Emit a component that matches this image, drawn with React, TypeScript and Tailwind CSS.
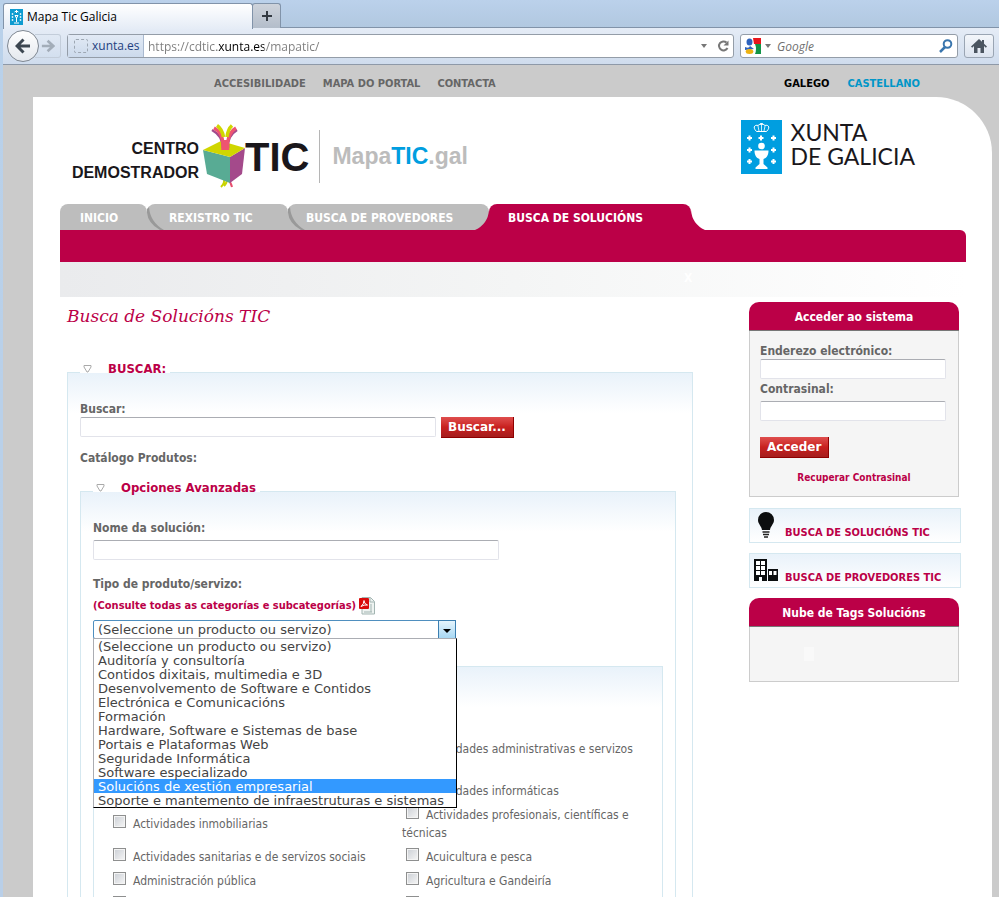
import React, {useState} from "react";
import clsx from "clsx";

const solutionTypes = [
  "(Seleccione un producto ou servizo)",
  "Auditoría y consultoría",
  "Contidos dixitais, multimedia e 3D",
  "Desenvolvemento de Software e Contidos",
  "Electrónica e Comunicacións",
  "Formación",
  "Hardware, Software e Sistemas de base",
  "Portais e Plataformas Web",
  "Seguridade Informática",
  "Software especializado",
  "Solucións de xestión empresarial",
  "Soporte e mantemento de infraestruturas e sistemas",
];

const sectors = [
  "Actividades administrativas e servizos auxiliares",
  "Actividades informáticas",
  "Actividades inmobiliarias",
  "Actividades profesionais, científicas e técnicas",
  "Actividades sanitarias e de servizos sociais",
  "Acuicultura e pesca",
  "Administración pública",
  "Agricultura e Gandeiría",
  "Alimentación",
  "Artesanía",
];

const XuntaShield = ({className}: {className: string}) => (
  <svg viewBox="0 0 41 54" preserveAspectRatio="none" className={className} aria-hidden="true">
    <rect width="41" height="54" fill="#009ee0" />
    <g stroke="#fff" strokeWidth="2">
      <path d="M6 18h5M8.500 15.500v5M17.500 18h5M20 15.500v5M30 18h5M32.500 15.500v5" />
      <path d="M6 30h5M8.500 27.500v5M30 30h5M32.500 27.500v5M6 41.500h5M8.500 39v5M30 41.500h5M32.500 39v5" />
    </g>
    <g fill="none" stroke="#fff">
      <path d="M15.500 11.500C11 7 14 4.500 17 5.500Q19 3.500 20.500 4.500Q22 3.500 24 5.500C27 4.500 30 7 25.500 11.500Z" />
      <path d="M18 11L17 6M23 11L24 6M20.500 11V3M19 3.500h3" strokeWidth=".8" />
    </g>
    <circle cx="20.500" cy="26" r="3.300" fill="#fff" />
    <path d="M13.500 30.500h14c0 5-2 7.500-5 8.500v5l4 3.500v1.500h-12v-1.500l4-3.500v-5c-3-1-5-3.500-5-8.500z" fill="#fff" />
  </svg>
);

const TabIcon = () => (
  <svg viewBox="0 0 13 16" className="h-4 w-[13px]" aria-hidden="true">
    <rect width="13" height="16" fill="#0d9bd0" />
    <path d="M4.500 3Q6.500 1 8.500 3M6.500 1v3M5 6.500h3L6.500 9zM6.500 8v5M4 14h5" stroke="#fff" fill="none" />
    <path d="M1.500 5h2M1.500 8h2M1.500 11h2M9.500 5h2M9.500 8h2M9.500 11h2M2.500 4v9M10.500 4v9" stroke="#fff" strokeWidth=".7" strokeDasharray="2 1" />
  </svg>
);

const CubeLogo = () => (
  <svg viewBox="0 0 42 65" className="h-[65px] w-[42px] shrink-0" aria-hidden="true">
    <path d="M21 55q1 4-3 8M24 55q0 4-3 7" stroke="#c8d400" strokeWidth="2" fill="none" />
    <path d="M24 55q4 3 5 8" stroke="#e84e6e" strokeWidth="2" fill="none" />
    <path d="M0 26L27 33L27 59L4 50Z" fill="#58ab94" />
    <path d="M27 33L42 24L39 50L27 59Z" fill="#a44a8b" />
    <path d="M0 26L18 17L42 24L27 33Z" fill="#d0d600" />
    <path d="M20 24Q20 12 9 6" stroke="#a44a8b" strokeWidth="2.500" fill="none" />
    <path d="M25 24Q24 12 34 6" stroke="#a44a8b" strokeWidth="2.500" fill="none" />
    <path d="M20 26V19Q19 8 11 4" stroke="#ee5571" strokeWidth="3.500" fill="none" />
    <path d="M24.500 26V19Q26 8 33 4" stroke="#ee5571" strokeWidth="3.500" fill="none" />
    <path d="M22.500 26V16" stroke="#ee5571" strokeWidth="3" />
    <path d="M20.500 13Q19 5 14 1.500M24 13Q25 5 29 1.500" stroke="#d0d600" strokeWidth="3.500" fill="none" />
  </svg>
);

const BrowserChrome = () => (
  <header className="shrink-0 font-['Open_Sans','Noto_Sans',sans-serif] text-[12px]">
    <div className="flex h-7 items-end bg-gradient-to-b from-[#bbd1eb] to-[#b1c8e0]">
      <div className="-mb-px flex h-[26px] w-[250px] items-center gap-1 rounded-t-[3px] border border-b-0 border-[#8193a9] bg-gradient-to-b from-white to-[#e5ecf6] pl-1.5 text-black">
        <TabIcon />
        <span>Mapa Tic Galicia</span>
      </div>
      <button
        type="button"
        aria-label="Nova lapela"
        className="-ml-px flex h-[25px] w-[29px] items-center justify-center rounded-t-[3px] border border-b-0 border-[#8193a9] bg-gradient-to-b from-[#ced3db] to-[#b3bdca]"
      >
        <svg viewBox="0 0 10 10" className="size-2.5">
          <path d="M5 0v10M0 5h10" stroke="#333a42" strokeWidth="2" />
        </svg>
      </button>
      <div className="h-full flex-1 border-b border-[#8193a9]" />
    </div>
    <div className="flex h-[37px] items-center border-b border-[#8e99a8] bg-gradient-to-b from-[#e5ecf6] to-[#cfdced] pr-[5px] pl-1">
      <button
        type="button"
        aria-label="Atrás"
        className="z-10 flex size-8 items-center justify-center rounded-full border border-[#7f8791] bg-gradient-to-b from-white to-[#e4e8ee]"
      >
        <svg viewBox="0 0 16 16" className="size-4">
          <path d="M8.500 1.500L2 8l6.500 6.500M2.500 8H15" stroke="#3c4650" strokeWidth="3" fill="none" />
        </svg>
      </button>
      <button
        type="button"
        aria-label="Adiante"
        className="-ml-1 flex h-6 w-[26px] items-center justify-center rounded-r-[3px] border border-l-0 border-[#c3cdda]"
      >
        <svg viewBox="0 0 16 16" className="size-3.5">
          <path d="M7.500 2l6.500 6-6.500 6M13.500 8H1" stroke="#a3adb9" strokeWidth="3" fill="none" />
        </svg>
      </button>
      <div className="ml-1.5 flex h-6 flex-1 items-center rounded-[3px] border border-[#949da8] bg-white">
        <div className="flex h-full w-[76px] items-center gap-1 border-r border-[#a9b9cf] bg-gradient-to-b from-[#e2eaf5] to-[#ccdaec] pl-1.5 text-[#1f3f80]">
          <span className="size-[14px] shrink-0 rounded-[2px] border border-dashed border-[#9da7b3]" />
          <span>xunta.es</span>
        </div>
        <input
          aria-label="Enderezo"
          defaultValue="https://cdtic.xunta.es/mapatic/"
          className="min-w-0 flex-1 bg-[linear-gradient(to_right,#7c7c7c_73px,#000_73px,#000_120px,#7c7c7c_120px)] bg-clip-text pt-0.5 pl-1 text-transparent outline-none"
        />
        <svg viewBox="0 0 6 4" className="mr-2.5 h-1 w-1.5">
          <path d="M0 0h6L3 4z" fill="#777" />
        </svg>
        <svg viewBox="0 0 12 12" className="mr-1 size-3">
          <path d="M9.500 2.500A4.500 4.500 0 1 0 10.500 8" stroke="#777" strokeWidth="2" fill="none" />
          <path d="M6.500 5.500h5V.5z" fill="#777" />
        </svg>
      </div>
      <div className="ml-1.5 flex h-6 w-[218px] items-center rounded-[3px] border border-[#949da8] bg-white pl-1">
        <svg viewBox="0 0 16 16" className="size-4">
          <path d="M8 0h8v6H9z" fill="#e8161c" />
          <path d="M10 6h6v10h-6q2-5 0-10z" fill="#129447" />
          <path d="M0 9q4 2 5-1l4 3-9 1z" fill="#2e63bd" />
          <ellipse cx="4.500" cy="4" rx="3" ry="3.500" fill="#2e63bd" />
          <ellipse cx="4.500" cy="13.500" rx="3.800" ry="2.500" fill="#eeb211" />
        </svg>
        <svg viewBox="0 0 6 4" className="mr-1.5 ml-1 h-1 w-1.5">
          <path d="M0 0h6L3 4z" fill="#777" />
        </svg>
        <input
          aria-label="Google"
          placeholder="Google"
          className="min-w-0 flex-1 pt-0.5 italic outline-none placeholder:text-[#707070]"
        />
        <svg viewBox="0 0 14 14" className="mr-1 size-3.5">
          <circle cx="8.500" cy="5" r="3.800" stroke="#3a76ae" strokeWidth="2" fill="none" />
          <path d="M6 8L1 13" stroke="#3a76ae" strokeWidth="2.500" />
        </svg>
      </div>
      <button
        type="button"
        aria-label="Inicio"
        className="ml-1.5 flex h-6 w-[30px] items-center justify-center rounded-[3px] border border-[#9aa5b3] bg-gradient-to-b from-[#f3f6fa] to-[#dce4ef]"
      >
        <svg viewBox="0 0 16 14" className="h-3.5 w-4">
          <path d="M8 0L0 7.500l1.200 1.200L3 7v7h3.500V9h3v5H13V7l1.800 1.700L16 7.500 13 4.700V1h-2v1.800z" fill="#4b5560" />
        </svg>
      </button>
    </div>
  </header>
);

const TopLinks = () => (
  <nav className="flex h-8 items-center pr-[79px] pl-[211px] pt-1.5 text-[11px] font-bold text-[#666]">
    <div className="flex flex-1 gap-[17px]">
      <a href="#accesibilidade">ACCESIBILIDADE</a>
      <a href="#mapa">MAPA DO PORTAL</a>
      <a href="#contacta">CONTACTA</a>
    </div>
    <div className="flex gap-[18px]">
      <a href="#gl" className="text-black">GALEGO</a>
      <a href="#es" className="text-[#0096c8]">CASTELLANO</a>
    </div>
  </nav>
);

const Masthead = () => (
  <div className="flex h-[107px] items-start pr-[77px] pl-[34px] pt-[23px]">
    <a href="#inicio" className="flex items-center pt-1 font-['Liberation_Sans',sans-serif] text-[#1a171b]">
      <span className="w-[132px] pt-2 text-right text-[16px] leading-6 font-bold">
        CENTRO
        <br />
        DEMOSTRADOR
      </span>
      <span className="ml-1">
        <CubeLogo />
      </span>
      <span className="text-[40px] leading-[60px] font-bold">TIC</span>
      <span className="mr-3 ml-2.5 h-[53px] w-px bg-[#b5b5b5]" />
      <span className="text-[23px] font-bold text-[#bcbcbc]">
        Mapa<span className="text-[#009ee0]">TIC</span>.gal
      </span>
    </a>
    <a href="#xunta" className="ml-auto flex gap-2">
      <XuntaShield className="h-[54px] w-[41px]" />
      <span className="font-['Lato',sans-serif] text-[23px] leading-6 text-[#1a171b]">
        XUNTA
        <br />
        DE GALICIA
      </span>
    </a>
  </div>
);

const TabShade = () => (
  <svg viewBox="0 0 17 26" className="absolute top-0 left-0 h-[26px] w-[17px]" aria-hidden="true">
    <path d="M0 5Q-1 18 13 26h4Q3 18 2 3z" fill="#999" />
  </svg>
);

const MainNav = () => (
  <nav className="pr-[26px] pl-[27px] text-[12px] font-bold text-white">
    <ul className="flex h-[26px] leading-7">
      <li className="w-[87px] rounded-t-lg bg-[#bdbdbd] pl-5">
        <a href="#inicio">INICIO</a>
      </li>
      <li className="relative w-[141px] rounded-t-lg bg-[#bdbdbd] pl-[22px]">
        <TabShade />
        <a href="#rexistro">REXISTRO TIC</a>
      </li>
      <li className="relative w-[201px] rounded-t-lg bg-[#bdbdbd] pl-[18px]">
        <TabShade />
        <a href="#provedores">BUSCA DE PROVEDORES</a>
      </li>
      <li className="relative w-[202px] rounded-t-lg bg-[#bb0047] pl-[19px]">
        <svg viewBox="0 0 14 26" className="absolute top-0 -left-3.5 h-[26px] w-3.5" aria-hidden="true">
          <path d="M14 6Q13 20 0 26H14z" fill="#bb0047" />
        </svg>
        <a href="#solucions">BUSCA DE SOLUCIÓNS</a>
        <svg viewBox="0 0 14 26" className="absolute top-0 -right-3.5 h-[26px] w-3.5" aria-hidden="true">
          <path d="M0 6Q1 20 14 26H0z" fill="#bb0047" />
        </svg>
      </li>
    </ul>
    <div className="h-8 rounded-tr-md bg-[#bb0047]" />
    <div className="h-[35px] bg-gradient-to-r from-[#eaebed] via-[#f4f5f5] to-white pl-[624px] leading-8">X</div>
  </nav>
);

interface PanelProps {
  legend?: string;
  className: string;
  children: React.ReactNode;
}

const Panel = ({legend, className, children}: PanelProps) => (
  <fieldset
    className={clsx(
      "border border-[#d5e8f0] bg-gradient-to-b from-[#e9f2fa] to-white bg-[length:100%_40px] bg-no-repeat",
      className,
    )}
  >
    {legend && (
      <legend className="float-left -mt-3 flex h-3 items-center bg-white pt-1 pr-1 pl-[3px] text-[13px] leading-3 font-bold text-[#bb0047]">
        <svg viewBox="0 0 9 8" className="mr-4 h-2 w-[9px]" aria-hidden="true">
          <path d="M1 .5h7v1.500L5 7H4L1 2z" fill="none" stroke="#aaa" />
        </svg>
        {legend}
      </legend>
    )}
    <div className="clear-both">{children}</div>
  </fieldset>
);

const fieldClass =
  "block h-5 rounded-[2px] border border-[#e2e3ea] border-t-[#abadb3] bg-white px-1 outline-none";

const RedButton = ({children}: {children: React.ReactNode}) => (
  <button
    type="button"
    className="h-[21px] border-r border-b border-[#8f0000] bg-gradient-to-b from-[#df4d4d] via-[#c9201f] to-[#a51e1e] px-[7px] font-['DejaVu_Sans',sans-serif] text-[12px] leading-5 font-bold text-white"
  >
    {children}
  </button>
);

const TypeSelect = () => {
  const [value, setValue] = useState(solutionTypes[0]);
  return (
    <div className="relative w-[363px] font-['DejaVu_Sans',sans-serif] text-[13px] font-normal text-[#444]">
      <select
        id="tipo"
        value={value}
        onChange={(e) => setValue(e.target.value)}
        className="block h-[19px] w-full appearance-none rounded-[2px] border border-[#4f8fbf] bg-white pl-1 leading-4 outline-none"
      >
        {solutionTypes.map((type) => (
          <option key={type}>{type}</option>
        ))}
      </select>
      <span className="pointer-events-none absolute top-0 right-0 flex h-[19px] w-[18px] items-center justify-center border border-[#3c7fb1] bg-gradient-to-b from-[#e5f4fc] to-[#a8d8f3]">
        <svg viewBox="0 0 8 4" className="mt-0.5 h-1 w-2">
          <path d="M0 0h8L4 4z" fill="#000" />
        </svg>
      </span>
      <ul
        role="listbox"
        className="absolute top-[18px] left-0 z-10 w-[364px] border border-black border-t-[#abadb3] border-l-[#abadb3] bg-white leading-4"
      >
        {solutionTypes.map((type) => (
          <li
            key={type}
            role="option"
            aria-selected={type === "Solucións de xestión empresarial"}
            onClick={() => setValue(type)}
            className="h-3.5 pl-1 whitespace-nowrap aria-selected:bg-[#3399ff] aria-selected:text-white"
          >
            {type}
          </li>
        ))}
      </ul>
    </div>
  );
};

const SearchForm = () => (
  <main className="min-w-0 flex-1">
    <h1 className="h-[75px] pt-1 font-['DejaVu_Serif',serif] text-[17px] leading-[30px] text-[#bb0047] italic">
      Busca de Solucións TIC
    </h1>
    <form className="text-[12px] font-bold text-[#666]">
      <Panel legend="BUSCAR:" className="pr-4 pb-4 pl-3">
        <label htmlFor="buscar" className="block pt-7 leading-4">
          Buscar:
        </label>
        <div className="flex items-start gap-[5px]">
          <input id="buscar" className={clsx(fieldClass, "w-[356px]")} />
          <RedButton>Buscar...</RedButton>
        </div>
        <p className="mt-3 mb-[25px] leading-4">Catálogo Produtos:</p>
        <Panel legend="Opciones Avanzadas" className="pr-3 pb-4 pl-3">
          <label htmlFor="nome" className="block pt-7 pb-1 leading-4">
            Nome da solución:
          </label>
          <input id="nome" className={clsx(fieldClass, "w-[406px]")} />
          <label htmlFor="tipo" className="mt-4 block leading-4">
            Tipo de produto/servizo:
          </label>
          <a href="#categorias" className="mt-1 mb-1 flex h-5 items-center gap-[3px] text-[11px] text-[#bb0047]">
            (Consulte todas as categorías e subcategorías)
            <svg viewBox="0 0 16 18" className="h-[18px] w-4" aria-hidden="true">
              <path d="M3 .5h8.500l4 4v12.500H3z" fill="#eef3f1" stroke="#a3b5b2" />
              <path d="M11 1v4h4M12 7v8M5 15h8" stroke="#a3b5b2" fill="none" />
              <rect y="1" width="10" height="11" rx="1" fill="#d90b0b" />
              <path d="M2 9.500Q5 7 5 3.500Q5 7 8.500 8Q5 7.500 2 9.500" stroke="#fff" fill="none" />
            </svg>
          </a>
          <TypeSelect />
          <Panel className="mt-[27px] pr-3 pb-4 pl-[15px]">
            {/* the first two rows only use the right column */}
            <ul className="grid grid-cols-[293px_1fr] items-center gap-y-1.5 pt-[73px] leading-[18px] font-normal">
              {sectors.map((sector) => (
                <li key={sector} className="first:col-start-2 nth-2:col-start-2">
                  <label>
                    <input
                      type="checkbox"
                      className="mr-[7px] ml-1 size-[13px] appearance-none border border-[#8e8f8f] bg-gradient-to-br from-[#cbcfd5] to-[#f6f6f6] shadow-[inset_0_0_0_1px_#f4f4f4]"
                    />
                    {sector}
                  </label>
                </li>
              ))}
            </ul>
          </Panel>
        </Panel>
      </Panel>
    </form>
  </main>
);

const BoxTitle = ({children}: {children: React.ReactNode}) => (
  <h2 className="h-[29px] rounded-t-[10px] border-b border-[#777] bg-[#bb0047] text-center text-[12px] leading-[30px] font-bold text-white">
    {children}
  </h2>
);

const Sidebar = () => (
  <aside className="w-[210px] shrink-0 pt-[5px] font-bold">
    <section>
      <BoxTitle>Acceder ao sistema</BoxTitle>
      <form className="h-[166px] border border-t-0 border-[#ccc] bg-[#f5f5f5] px-2.5 pt-3 text-[12px] leading-4 text-[#666]">
        <label htmlFor="email" className="block">
          Enderezo electrónico:
        </label>
        <input id="email" type="email" className={clsx(fieldClass, "w-[186px]")} />
        <label htmlFor="contrasinal" className="mt-0.5 mb-1 block">
          Contrasinal:
        </label>
        <input id="contrasinal" type="password" className={clsx(fieldClass, "mb-4 w-[186px]")} />
        <RedButton>Acceder</RedButton>
        <a href="#recuperar" className="mt-3 block text-center text-[10px] leading-4 text-[#bb0047]">
          Recuperar Contrasinal
        </a>
      </form>
    </section>
    <a
      href="#solucions"
      className="mt-[11px] -mr-0.5 flex h-[35px] border border-[#d5e8f0] bg-gradient-to-b from-[#e9f2fa] to-white text-[11px] text-[#bb0047]"
    >
      <svg viewBox="0 0 16 28" className="mt-[3px] ml-2 h-7 w-4" aria-hidden="true">
        <path d="M8 0a8 8 0 0 1 8 8c0 4-3.500 6-4 10H4C3.500 14 0 12 0 8a8 8 0 0 1 8-8z" fill="#0c0e0f" />
        <path d="M4.500 20h7M5 22.500h6M6 25h4" stroke="#222" strokeWidth="1.300" />
      </svg>
      <span className="mt-4 ml-[11px] leading-4">BUSCA DE SOLUCIÓNS TIC</span>
    </a>
    <a
      href="#provedores"
      className="mt-2.5 -mr-0.5 flex h-[35px] border border-[#d5e8f0] bg-gradient-to-b from-[#e9f2fa] to-white text-[11px] text-[#bb0047]"
    >
      <svg viewBox="0 0 24 22" className="mt-[5px] ml-1 h-[22px] w-6" aria-hidden="true">
        <path d="M0 0h13v22H8v-4H5v4H0zM14 10h10v12H14z" fill="#0c0e0f" />
        <path d="M2 2h4v4H2zM7 2h4v4H7zM2 7h4v4H2zM7 7h4v4H7zM2 12h4v4H2zM7 12h4v4H7zM15 12h3v4h-3zM19.500 12h3v4h-3z" fill="#fff" />
      </svg>
      <span className="mt-4 ml-[7px] leading-4">BUSCA DE PROVEDORES TIC</span>
    </a>
    <section className="mt-2.5">
      <BoxTitle>Nube de Tags Solucións</BoxTitle>
      <div className="h-[55px] border border-t-0 border-[#ccc] bg-[#f5f5f5] pt-5 pl-[54px]">
        <div className="h-3.5 w-2.5 bg-[#f9f9f9]" />
      </div>
    </section>
  </aside>
);

const App = () => {
  return (
    <div className="flex h-screen flex-col overflow-hidden bg-gradient-to-b from-[#b9d1ea] to-[#b9cfe8] pl-[3px] font-['DejaVu_Sans_Condensed','DejaVu_Sans',sans-serif]">
      <BrowserChrome />
      <div className="min-h-0 flex-1 overflow-hidden bg-[#cbcbcb]">
        <TopLinks />
        <div className="mr-[7px] ml-[30px] min-h-screen rounded-tr-[56px] bg-white">
          <Masthead />
          <MainNav />
          <div className="flex gap-14 pr-[33px] pl-[34px]">
            <SearchForm />
            <Sidebar />
          </div>
        </div>
      </div>
    </div>
  );
};

export default App;
